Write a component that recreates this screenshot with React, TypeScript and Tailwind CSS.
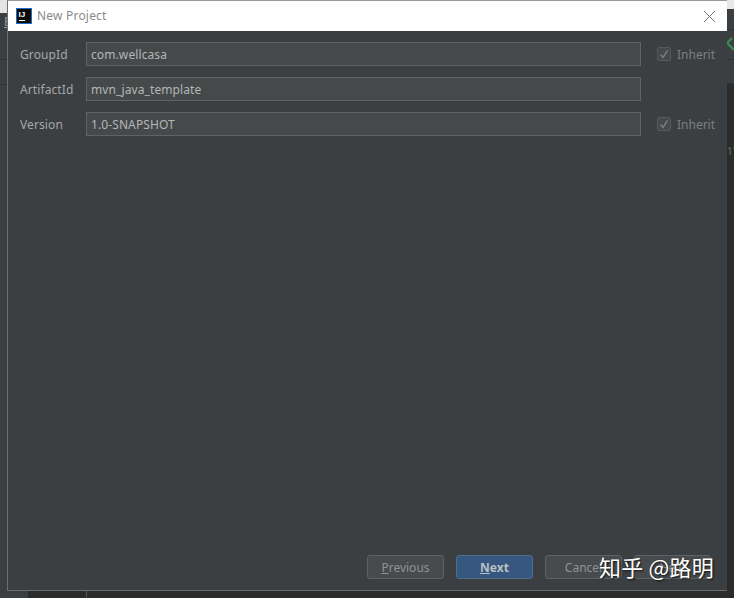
import React from "react";

const FONT = "font-['Noto_Sans','Open_Sans','Noto_Sans_CJK_SC',sans-serif]";

function Row({ label, value, inherit }: { label: string; value: string; inherit?: boolean }) {
  return (
    <div className="flex items-center h-6">
      <div className="w-[66px] shrink-0 pt-px text-[12px] tracking-[0.1px] text-[#a4a8a9]">{label}</div>
      <div className="w-[555px] shrink-0 h-6 flex items-center pl-[4px] pr-1 pt-px bg-[#45494a] border border-[#5f6364] text-[12px] tracking-[0.1px] text-[#b3b6b7]">
        {value}
      </div>
      {inherit && (
        <div className="flex items-center ml-4 shrink-0">
          <div className="w-[14px] h-[14px] flex items-center justify-center border border-[#565a5b] rounded-[2px] bg-[#45494a]">
            <svg width="12" height="12" viewBox="0 0 12 12" fill="none">
              <path d="M2.5 6.5 L5 9.5 L9.5 2.5" stroke="#777b7c" strokeWidth="1.6" />
            </svg>
          </div>
          <span className="ml-[6px] pt-[2px] text-[12px] text-[#7b7f80]">Inherit</span>
        </div>
      )}
    </div>
  );
}

function Btn({ children, primary }: { children: React.ReactNode; primary?: boolean }) {
  return (
    <div
      className={
        primary
          ? "w-[77px] h-6 pt-px flex items-center justify-center rounded-[3px] border border-[#4c708c] bg-[#365880] text-[12px] font-bold text-[#bbbfc1]"
          : "w-[77px] h-6 pt-px flex items-center justify-center rounded-[3px] border border-[#5e6264] bg-[#474b4d] text-[12px] text-[#8f9395]"
      }
    >
      {children}
    </div>
  );
}

export default function App() {
  return (
    <div className={`relative w-[734px] h-[598px] overflow-hidden bg-[#2b2b2b] ${FONT}`}>
      {/* IDE behind the dialog */}
      <div className="absolute left-0 top-0 w-[8px] h-full bg-[#3c3f41]">
        <div className="h-[13px] bg-[#e4e4e4]" />
        <div className="mt-[46px] h-px bg-[#2f3132]" />
        <div className="mt-[24px] h-px bg-[#2f3132]" />
      </div>
      <div className="absolute left-[4px] top-[15px] text-[12px] leading-[14px] text-[#9a9d9e] underline">E</div>
      <div className="absolute right-0 top-0 w-[8px] h-[9px] bg-[#e8e8e8]" />
      <div className="absolute right-0 top-[9px] w-[8px] h-[75px] bg-[#3c3f41] border-b border-[#2f3132]">
        <div className="mt-[20px] h-px bg-[#2f3132]" />
        <div className="mt-[29px] h-px bg-[#2f3132]" />
      </div>
      <svg width="8" height="18" viewBox="0 0 8 18" className="absolute left-[726px] top-[36px]" fill="none">
        <path d="M1 7 L8 14 M1 7 L6 2" stroke="#3b8a4e" strokeWidth="2.4" />
      </svg>
      <div className="absolute left-[727px] top-[145px] text-[10px] leading-[12px] text-[#5f7a50]">1"</div>
      <div className="absolute left-[86px] top-[590px] w-px h-2 bg-[#555]" />
      <div className="absolute left-0 top-[591px] w-[28px] h-[7px] bg-[#3c3f41]" />

      {/* dialog */}
      <div className="absolute left-[7px] top-0 w-[720px] h-[591px] flex flex-col border-l border-b border-t border-[#6b6e70] border-t-[#9a9a9a]">
        <div className="h-[30px] bg-white flex items-center pl-[8px] pr-[9px] shrink-0">
          <svg width="16" height="16" viewBox="0 0 16 16" className="shrink-0">
            <rect width="16" height="16" fill="#1a6fc4" />
            <rect x="1" y="1" width="14" height="14" fill="#0b0b0b" />
            <text x="2.5" y="9" fontSize="8" fontWeight="700" fill="#fff" fontFamily="Liberation Sans">IJ</text>
            <rect x="3" y="12" width="6" height="1" fill="#fff" />
          </svg>
          <span className="ml-[5px] text-[12px] tracking-[0.2px] text-[#8a8a8a]">New Project</span>
          <svg width="13" height="13" viewBox="0 0 13 13" className="ml-auto mr-[2px]" fill="none">
            <path d="M1 1 L12 12 M12 1 L1 12" stroke="#777" strokeWidth="1" />
          </svg>
        </div>
        <div className="flex-1 bg-[#3c3f41] flex flex-col pt-[11px] pl-3 pr-[15px] pb-[11px]">
          <div className="flex flex-col gap-[11px]">
            <Row label="GroupId" value="com.wellcasa" inherit />
            <Row label="ArtifactId" value="mvn_java_template" />
            <Row label="Version" value="1.0-SNAPSHOT" inherit />
          </div>
          <div className="mt-auto flex justify-end gap-3 pr-px">
            <Btn>
              <span><span className="underline">P</span>revious</span>
            </Btn>
            <Btn primary>
              <span><span className="underline">N</span>ext</span>
            </Btn>
            <Btn>Cancel</Btn>
            <Btn>Help</Btn>
          </div>
        </div>
      </div>

      {/* watermark */}
      <div className="absolute left-[599px] top-[550px] text-[22px] leading-[32px] tracking-[0.2px] whitespace-nowrap text-white font-['Noto_Sans_CJK_SC','Noto_Sans',sans-serif] [text-shadow:1px_1px_2px_#111]">
        知乎 @路明
      </div>
    </div>
  );
}
